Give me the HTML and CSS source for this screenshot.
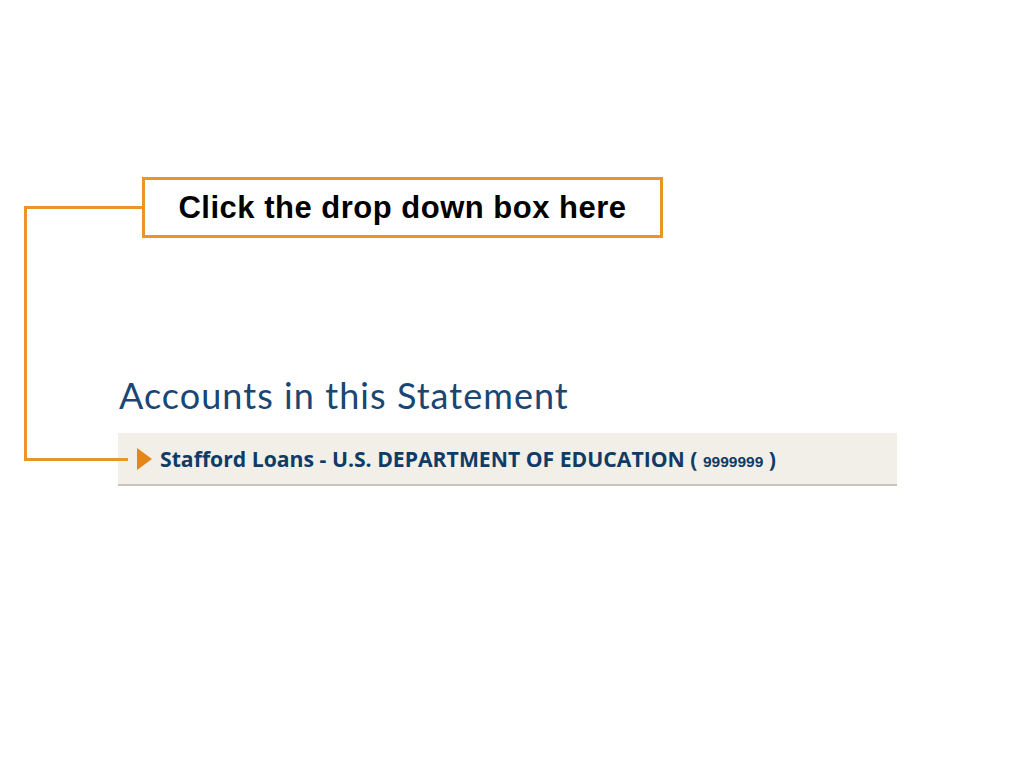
FILE: index.html
```html
<!DOCTYPE html>
<html lang="en">
<head>
<meta charset="utf-8">
<title>Accounts in this Statement</title>
<link rel="stylesheet" href="styles.css">
</head>
<body>
<div class="page">
  <div class="callout">Click the drop down box here</div>
  <div class="connector-top"></div>
  <div class="connector-left"></div>
  <div class="connector-bottom"></div>

  <section class="accounts">
    <h1 class="accounts-title">Accounts in this Statement</h1>
    <div class="account-bar">
      <span class="caret"></span>
      <span class="account-name">Stafford Loans - U.S. DEPARTMENT OF EDUCATION ( <span class="account-num">9999999</span> )</span>
    </div>
  </section>
</div>
</body>
</html>
```

FILE: styles.css
```css
html, body {
  margin: 0;
  padding: 0;
  background: #ffffff;
}

.page {
  position: relative;
  width: 1024px;
  height: 768px;
  overflow: hidden;
}

.callout {
  position: absolute;
  left: 142px;
  top: 177px;
  width: 515px;
  height: 55px;
  border: 3px solid #e8952c;
  display: flex;
  align-items: center;
  justify-content: center;
  font-family: "Liberation Sans", Arial, sans-serif;
  font-weight: bold;
  font-size: 31px;
  color: #000;
  letter-spacing: 0.5px;
}

.connector-top {
  position: absolute;
  left: 24px;
  top: 206px;
  width: 118px;
  height: 3px;
  background: #e8952c;
}

.connector-left {
  position: absolute;
  left: 24px;
  top: 206px;
  width: 3px;
  height: 255px;
  background: #e8952c;
}

.connector-bottom {
  position: absolute;
  left: 24px;
  top: 458px;
  width: 104px;
  height: 3px;
  background: #e8952c;
}

.accounts {
  padding: 373px 0 0 118px;
}

.accounts-title {
  margin: 0 0 16px 1px;
  font-family: Lato, "Open Sans", sans-serif;
  font-weight: normal;
  font-size: 36px;
  line-height: 44px;
  letter-spacing: 1.05px;
  color: #1a4674;
}

.account-bar {
  width: 779px;
  height: 53px;
  box-sizing: border-box;
  background: #f1efe8;
  border-bottom: 2px solid #c9c5ba;
  display: flex;
  align-items: center;
  gap: 8px;
  padding-left: 19px;
}

.caret {
  width: 0;
  height: 0;
  border-top: 11px solid transparent;
  border-bottom: 11px solid transparent;
  border-left: 15px solid #e2861d;
}

.account-name {
  font-family: "Open Sans", sans-serif;
  font-weight: bold;
  font-size: 21.2px;
  color: #0f3b67;
  white-space: nowrap;
}

.account-num {
  font-family: "Liberation Sans", Arial, sans-serif;
  font-size: 15.5px;
  font-weight: bold;
}
```
